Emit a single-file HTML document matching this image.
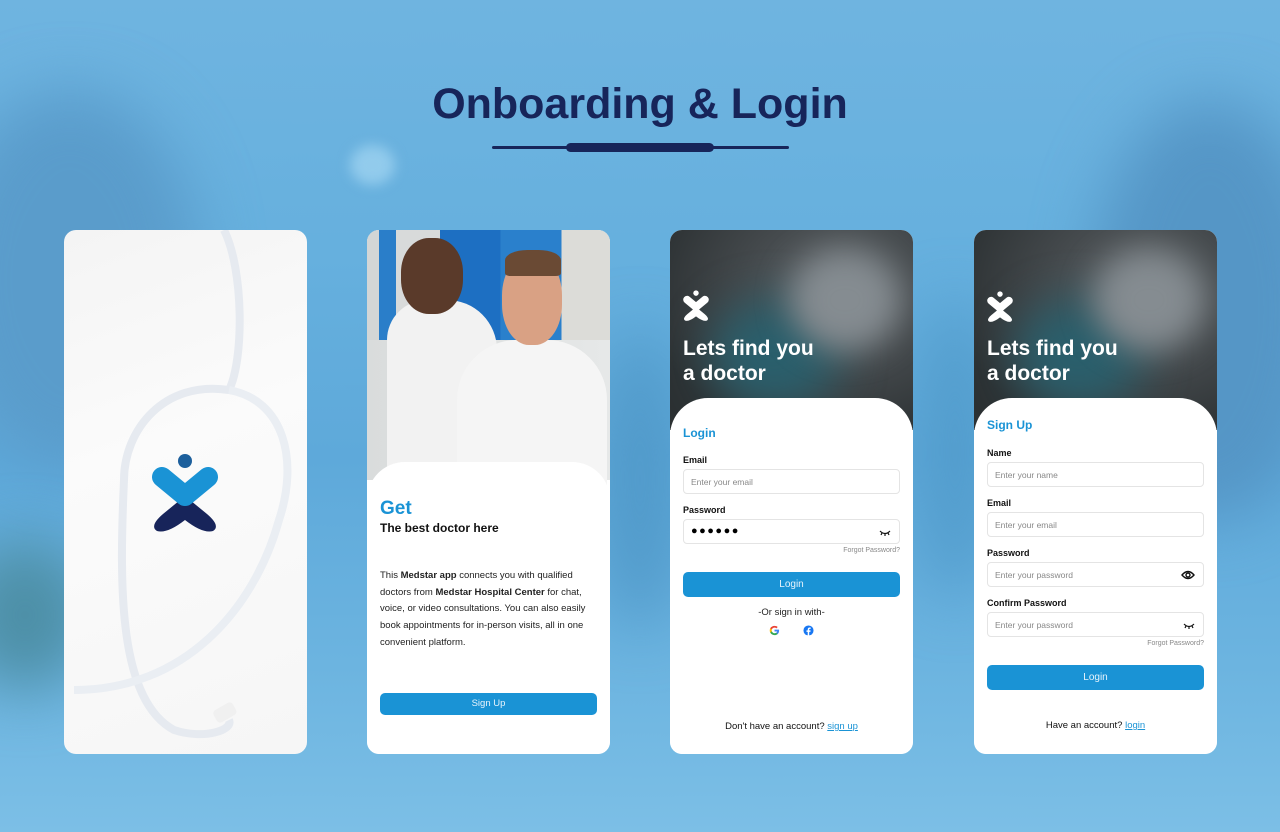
<!DOCTYPE html>
<html><head><meta charset="utf-8">
<style>
*{margin:0;padding:0;box-sizing:border-box}
body{width:1280px;height:832px;overflow:hidden;font-family:"Liberation Sans",sans-serif;position:relative;
background:linear-gradient(180deg,#6fb4e0 0%,#66b0de 30%,#5ea9da 55%,#6cb4e0 80%,#7cbfe6 100%)}
.blob{position:absolute;border-radius:50%;filter:blur(30px)}
h1{position:absolute;top:80px;left:0;width:1280px;text-align:center;font-size:43px;font-weight:bold;color:#17255a;letter-spacing:0}
.line{position:absolute;top:146px;left:492px;width:297px;height:3px;background:#17255a;border-radius:2px}
.line2{position:absolute;top:143px;left:566px;width:148px;height:9px;background:#17255a;border-radius:5px}
.card{position:absolute;top:230px;width:243px;height:524px;border-radius:12px;overflow:hidden;background:#fff}
.panel{position:absolute;left:0;right:0;bottom:0;background:#fff;border-radius:38px 38px 12px 12px}
.lbl{font-size:9px;line-height:11px;font-weight:bold;color:#111;margin:11px 0 0 13px}
.inp{margin:3px 13px 0;height:25px;border:1px solid #e4e4e4;border-radius:4px;font-size:8.5px;color:#888;padding:7px 7px;position:relative}
.btn{margin:0 13px;height:25px;border-radius:5px;background:#1a93d5;color:#e8f4fc;font-size:10px;text-align:center;line-height:25px}
.fp{font-size:7px;line-height:8px;color:#888;text-align:right;margin:3px 13px 0}
.hdr{position:absolute;left:0;top:0;right:0;height:200px;background:radial-gradient(ellipse at 70% 30%,#60666a 0%,#44494c 40%,#2c3133 80%)}
.hdr .mask{position:absolute;left:120px;top:20px;width:110px;height:100px;border-radius:50%;background:#858c91;filter:blur(16px)}
.hdr .teal{position:absolute;left:40px;top:70px;width:130px;height:110px;border-radius:50%;background:#2a5f6c;filter:blur(22px)}
.big{position:absolute;left:13px;top:106px;color:#fff;font-size:21px;font-weight:bold;line-height:25px}
</style></head><body>
<div class="blob" style="left:-60px;top:90px;width:260px;height:380px;background:#5a9ccb"></div>
<div class="blob" style="left:1090px;top:100px;width:240px;height:420px;background:#5596c6"></div>
<div class="blob" style="left:-40px;top:540px;width:130px;height:150px;background:#4d8fa6"></div>
<div class="blob" style="left:600px;top:330px;width:80px;height:300px;background:#5099c9"></div>
<div class="blob" style="left:920px;top:300px;width:70px;height:300px;background:#519bcb"></div>
<div class="blob" style="left:350px;top:145px;width:45px;height:40px;background:#92cbec;filter:blur(6px)"></div>
<h1>Onboarding &amp; Login</h1>
<div class="line"></div><div class="line2"></div>

<!-- card 1 -->
<div class="card" style="left:64px;background:linear-gradient(160deg,#f4f4f4,#fbfbfb 40%,#f6f6f6)">
<svg width="243" height="524" style="position:absolute;left:0;top:0">
<path d="M160 0 C180 40 180 130 165 160 C100 150 60 200 60 250 C55 360 55 470 110 500 C140 510 170 500 165 490" fill="none" stroke="#e6eaf0" stroke-width="8"/>
<path d="M165 160 C220 170 235 230 215 290 C190 380 120 460 10 460" fill="none" stroke="#eaeef3" stroke-width="8"/>
<rect x="150" y="476" width="22" height="14" rx="4" fill="#f0f0f0" transform="rotate(-30 160 483)"/>
</svg>
<svg width="72" height="80" style="position:absolute;left:85px;top:222px" viewBox="0 0 72 80">
<path d="M36 44 L58 62 Q72 74 64 79 Q54 82 36 68 Q18 82 8 79 Q0 74 14 62 Z" fill="#17245a"/>
<path d="M13 25 L36 44 L59 25" fill="none" stroke="#1a93d5" stroke-width="20" stroke-linecap="round" stroke-linejoin="round"/>
<circle cx="36" cy="9" r="7" fill="#1c5f9c"/>
</svg>
</div>

<!-- card 2 -->
<div class="card" style="left:367px">
<div style="position:absolute;left:0;top:0;width:243px;height:250px;background:linear-gradient(90deg,#d9dcdc,#e6e8e8)">
<div style="position:absolute;left:0;top:0;width:243px;height:110px;background:linear-gradient(90deg,#d3d6d6 0 5%,#2a7ec9 5% 12%,#d8dada 12% 30%,#1d6fc2 30% 55%,#2a80cc 55% 80%,#dcdcd8 80% 100%)"></div>
<div style="position:absolute;left:20px;top:70px;width:110px;height:200px;border-radius:40px 50px 0 0;background:#f2f2f2"></div>
<div style="position:absolute;left:34px;top:8px;width:62px;height:76px;border-radius:45%;background:#5a3a2a"></div>
<div style="position:absolute;left:90px;top:110px;width:150px;height:160px;border-radius:60px 60px 0 0;background:#f5f5f5"></div>
<div style="position:absolute;left:135px;top:25px;width:60px;height:90px;border-radius:45%;background:#d9a184"></div>
<div style="position:absolute;left:138px;top:20px;width:56px;height:26px;border-radius:40% 40% 10% 10%;background:#6a4a34"></div>
</div>
<div class="panel" style="top:232px">
<div style="margin:36px 0 0 13px;font-size:19px;font-weight:bold;color:#1a93d5">Get</div>
<div style="margin:1px 0 0 13px;font-size:12px;font-weight:bold;color:#111">The best doctor here</div>
<div style="margin:33px 13px 0;font-size:9.5px;line-height:16.7px;color:#222">This <b>Medstar app</b> connects you with qualified doctors from <b>Medstar Hospital Center</b> for chat, voice, or video consultations. You can also easily book appointments for in-person visits, all in one convenient platform.</div>
<div class="btn" style="position:absolute;left:0;right:0;top:231px;height:22px;line-height:22px;font-size:9.5px">Sign Up</div>
</div>
</div>

<!-- card 3 -->
<div class="card" style="left:670px">
<div class="hdr"><div class="teal"></div><div class="mask"></div></div>
<svg width="28" height="31" style="position:absolute;left:12px;top:60px" viewBox="0 0 72 80"><path d="M36 44 L58 62 Q72 74 64 79 Q54 82 36 68 Q18 82 8 79 Q0 74 14 62 Z" fill="#fff"/><path d="M13 25 L36 44 L59 25" fill="none" stroke="#fff" stroke-width="20" stroke-linecap="round" stroke-linejoin="round"/><circle cx="36" cy="8" r="7" fill="#fff"/></svg>
<div class="big">Lets find you<br>a doctor</div>
<div class="panel" style="top:168px">
<div style="margin:28px 0 0 13px;font-size:12px;line-height:14px;font-weight:bold;color:#1a93d5">Login</div>
<div class="lbl" style="margin-top:15px">Email</div>
<div class="inp">Enter your email</div>
<div class="lbl">Password</div>
<div class="inp" style="color:#000;font-size:11px;padding:5px 7px;letter-spacing:1.5px">●●●●●●<svg width="12" height="6" style="position:absolute;right:8px;top:10px" viewBox="0 0 12 6"><path d="M1 1 Q6 6 11 1 M3 3 L2 5 M6 4 L6 6 M9 3 L10 5" fill="none" stroke="#111" stroke-width="1.2"/></svg></div>
<div class="fp">Forgot Password?</div>
<div class="btn" style="margin-top:17px">Login</div>
<div style="text-align:center;font-size:9.5px;color:#222;margin-top:10px">-Or sign in with-</div>
<div style="text-align:center;margin-top:7px;height:12px">
<svg width="11" height="11" viewBox="0 0 24 24" style="vertical-align:top"><path d="M22 12.2c0-.7-.1-1.4-.2-2H12v3.9h5.6c-.2 1.3-1 2.4-2.1 3.1v2.6h3.4c2-1.8 3.1-4.5 3.1-7.6z" fill="#4285f4"/><path d="M12 22c2.8 0 5.2-.9 6.9-2.5l-3.4-2.6c-.9.6-2.1 1-3.5 1-2.7 0-5-1.8-5.8-4.3H2.7v2.7C4.4 19.7 7.9 22 12 22z" fill="#34a853"/><path d="M6.2 13.6c-.2-.6-.3-1.2-.3-1.9s.1-1.3.3-1.9V7.1H2.7C2 8.6 1.6 10.2 1.6 12s.4 3.4 1.1 4.9l3.5-3.3z" fill="#fbbc05"/><path d="M12 5.8c1.5 0 2.9.5 4 1.6l3-3C17.2 2.8 14.8 2 12 2 7.9 2 4.4 4.3 2.7 7.1l3.5 2.7C7 7.5 9.3 5.8 12 5.8z" fill="#ea4335"/></svg>
<svg width="11" height="11" viewBox="0 0 24 24" style="vertical-align:top;margin-left:18px"><circle cx="12" cy="12" r="11" fill="#1877f2"/><path d="M13.5 23v-8h2.7l.4-3.2h-3.1V9.9c0-.9.3-1.5 1.6-1.5h1.7V5.6c-.3 0-1.3-.1-2.5-.1-2.4 0-4 1.5-4 4.2v2.1H7.6V15h2.7v8z" fill="#fff"/></svg>
</div>
<div style="position:absolute;left:0;right:0;top:323px;text-align:center;font-size:9.5px;color:#111">Don't have an account? <span style="color:#1a93d5;text-decoration:underline">sign up</span></div>
</div>
</div>

<!-- card 4 -->
<div class="card" style="left:974px">
<div class="hdr"><div class="teal"></div><div class="mask"></div></div>
<svg width="28" height="31" style="position:absolute;left:12px;top:61px" viewBox="0 0 72 80"><path d="M36 44 L58 62 Q72 74 64 79 Q54 82 36 68 Q18 82 8 79 Q0 74 14 62 Z" fill="#fff"/><path d="M13 25 L36 44 L59 25" fill="none" stroke="#fff" stroke-width="20" stroke-linecap="round" stroke-linejoin="round"/><circle cx="36" cy="8" r="7" fill="#fff"/></svg>
<div class="big">Lets find you<br>a doctor</div>
<div class="panel" style="top:168px">
<div style="margin:20px 0 0 13px;font-size:12px;line-height:14px;font-weight:bold;color:#1a93d5">Sign Up</div>
<div class="lbl" style="margin-top:16px">Name</div>
<div class="inp">Enter your name</div>
<div class="lbl">Email</div>
<div class="inp">Enter your email</div>
<div class="lbl">Password</div>
<div class="inp">Enter your password<svg width="14" height="10" style="position:absolute;right:8px;top:7px" viewBox="0 0 14 10"><path d="M1 5 Q7 -2 13 5 Q7 12 1 5Z" fill="none" stroke="#111" stroke-width="1.4"/><circle cx="7" cy="5" r="2" fill="none" stroke="#111" stroke-width="1.4"/></svg></div>
<div class="lbl">Confirm Password</div>
<div class="inp">Enter your password<svg width="12" height="6" style="position:absolute;right:8px;top:10px" viewBox="0 0 12 6"><path d="M1 1 Q6 6 11 1 M3 3 L2 5 M6 4 L6 6 M9 3 L10 5" fill="none" stroke="#111" stroke-width="1.2"/></svg></div>
<div class="fp">Forgot Password?</div>
<div class="btn" style="margin-top:17px">Login</div>
<div style="position:absolute;left:0;right:0;top:322px;text-align:center;font-size:9.5px;color:#111">Have an account? <span style="color:#1a93d5;text-decoration:underline">login</span></div>
</div>
</div>
</body></html>
